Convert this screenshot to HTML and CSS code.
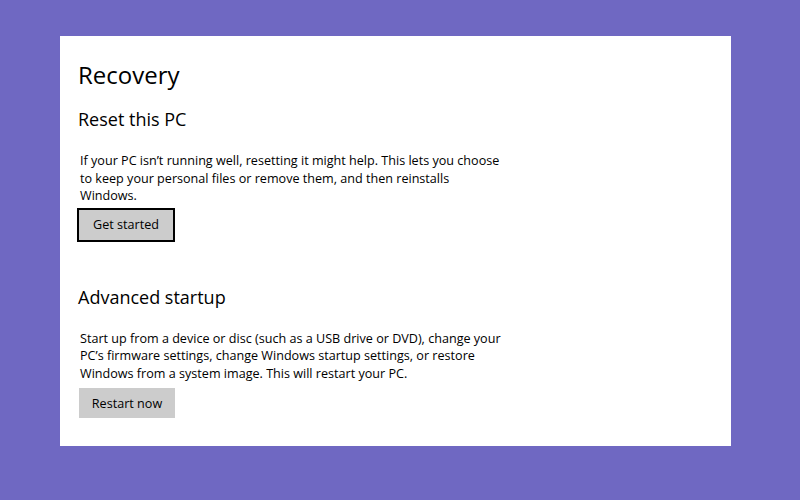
FILE: index.html
```html
<!DOCTYPE html>
<html lang="en">
<head>
    <meta charset="UTF-8">
    <title>Recovery</title>
    <link rel="stylesheet" href="styles.css">
</head>
<body>
    <div class="settings-page">
        <h1 class="page-title">Recovery</h1>

        <section class="section">
            <h2 class="section-title">Reset this PC</h2>
            <p class="section-text">If your PC isn’t running well, resetting it might help. This lets you choose to keep your personal files or remove them, and then reinstalls Windows.</p>
            <button class="btn btn-focused">Get started</button>
        </section>

        <section class="section section-advanced">
            <h2 class="section-title">Advanced startup</h2>
            <p class="section-text">Start up from a device or disc (such as a USB drive or DVD), change your PC’s firmware settings, change Windows startup settings, or restore Windows from a system image. This will restart your PC.</p>
            <button class="btn">Restart now</button>
        </section>
    </div>
</body>
</html>
```

FILE: styles.css
```css
* {
    box-sizing: border-box;
}
body {
    margin: 0;
    height: 100vh;
    background-color: #6f68c2;
    font-family: 'Open Sans', 'Noto Sans', sans-serif;
    color: #000;
    padding: 36px 0 0 60px;
}
.settings-page {
    width: 671px;
    height: 410px;
    background: #ffffff;
    padding: 22px 18px 0 18px;
}
.page-title {
    margin: 0;
    font-size: 24px;
    font-weight: 400;
    line-height: 34px;
}
.section-title {
    margin: 0;
    font-size: 18px;
    font-weight: 400;
    line-height: 26px;
}
.section {
    margin-top: 14px;
}
.section-advanced {
    margin-top: 42px;
}
.section-text {
    margin: 20px 0 3px 2px;
    width: 424px;
    font-size: 12.6px;
    line-height: 17.5px;
}
.section-advanced .section-text {
    margin-bottom: 6px;
}
.btn {
    display: block;
    margin-left: 1px;
    width: 96px;
    height: 30px;
    border: none;
    background-color: #cccccc;
    font-family: inherit;
    font-size: 12.6px;
    color: #000;
    padding: 0;
}
.btn-focused {
    margin-left: -1px;
    width: 98px;
    height: 34px;
    border: 2px solid #000;
}
```
